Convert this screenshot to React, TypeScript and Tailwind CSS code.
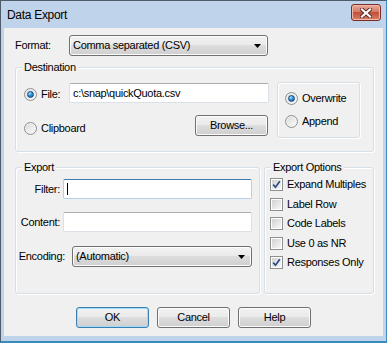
import React from "react";

const btnFace =
  "rounded-[3px] border border-[#707070] bg-[linear-gradient(#f2f2f2,#ebebeb_45%,#dddddd_50%,#cfcfcf)] shadow-[inset_0_0_0_1px_#fcfcfc]";
const groupBox =
  "relative border border-[#d5dfe5] rounded-[3px] shadow-[inset_1px_1px_0_#ffffff,1px_1px_0_#ffffff]";
const textBox =
  "h-[20px] bg-white border border-[#dbdfe6] border-t-[#abadb3] rounded-[2px] flex items-center pl-[3px]";

function Radio({ checked }: { checked?: boolean }) {
  return (
    <span className="w-[13px] h-[13px] shrink-0 rounded-full border border-[#8e8f8f] bg-[linear-gradient(135deg,#d6d6d6,#ffffff)] shadow-[inset_0_0_0_1px_#f2f2f2] flex items-center justify-center">
      {checked && (
        <span className="w-[7px] h-[7px] rounded-full border border-[#1b4f86] bg-[radial-gradient(circle_at_35%_30%,#b5e8ff,#2b8fd8_45%,#0b4f96)]" />
      )}
    </span>
  );
}

function Check({ checked }: { checked?: boolean }) {
  return (
    <span className="w-[13px] h-[13px] shrink-0 border border-[#8e8f8f] bg-white p-[1px] flex">
      <span className="flex-1 bg-[linear-gradient(135deg,#d2d2d2,#f6f6f6)] flex items-center justify-center">
        {checked && (
          <svg width="9" height="9" viewBox="0 0 9 9">
            <path d="M1.2 4.6 L3.5 7.2 L7.8 1.2" stroke="#2b4c8c" strokeWidth="1.7" fill="none" />
          </svg>
        )}
      </span>
    </span>
  );
}

function Combo({ value, width }: { value: string; width: string }) {
  return (
    <div className={`${btnFace} ${width} h-[21px] flex items-center pl-[3px] pr-[6px]`}>
      <span className="flex-1">{value}</span>
      <svg width="7" height="4" viewBox="0 0 7 4">
        <path d="M0 0 H7 L3.5 4 Z" fill="#000" />
      </svg>
    </div>
  );
}

function Legend({ text, left }: { text: string; left: string }) {
  return (
    <span className={`absolute -top-[7px] ${left} px-[2px] bg-[#f0f0f0] leading-[13px]`}>{text}</span>
  );
}

export default function App() {
  const options = [
    { label: "Expand Multiples", checked: true },
    { label: "Label Row", checked: false },
    { label: "Code Labels", checked: false },
    { label: "Use 0 as NR", checked: false },
    { label: "Responses Only", checked: true },
  ];

  return (
    <div className="w-[387px] h-[343px] flex flex-col bg-[#bfd4eb] border border-[#4f5d6b] border-r-[#3f8cc0] border-b-2 border-b-[#3a8cbf] font-['Liberation_Sans',Arial,sans-serif] text-[11px] tracking-[-0.3px] text-black leading-[13px]">
      {/* title bar */}
      <div className="h-[27px] flex justify-between items-start pl-[6px] pr-[5px]">
        <span className="mt-[7px] text-[12px] leading-[14px]">Data Export</span>
        <div className="mt-[3px] w-[30px] h-[17px] rounded-[3px] border border-[#7a2f24] bg-[linear-gradient(#ebaa9c,#d47a66_45%,#c2503c_50%,#d5806a)] shadow-[inset_0_0_0_1px_#f0b8aa] flex items-center justify-center">
          <svg width="12" height="10" viewBox="0 0 12 10">
            <path d="M2 1.5 L10 8.5 M10 1.5 L2 8.5" stroke="#5c2620" strokeWidth="4" strokeLinecap="square" />
            <path d="M2 1.5 L10 8.5 M10 1.5 L2 8.5" stroke="#ffffff" strokeWidth="2.2" strokeLinecap="square" />
          </svg>
        </div>
      </div>

      {/* client area */}
      <div className="mx-[3px] h-[308px] bg-[#f0f0f0] flex flex-col">
        <div className="ml-[11px] mt-[7px] flex items-center h-[21px]">
          <span className="w-[54px]">Format:</span>
          <Combo value="Comma separated (CSV)" width="w-[199px]" />
        </div>

        {/* Destination */}
        <div className={`${groupBox} ml-[11px] mt-[11px] w-[359px] h-[85px] flex pt-[14px]`}>
          <Legend text="Destination" left="left-[6px]" />
          <div className="w-[253px] pl-[8px] pt-[1px] flex flex-col">
            <div className="flex items-center h-[20px]">
              <span className="flex items-center gap-[4px] mt-[2px]">
                <Radio checked />
                <span>File:</span>
              </span>
              <div className={`${textBox} ml-auto w-[200px]`}>c:\snap\quickQuota.csv</div>
            </div>
            <div className="flex items-end h-[21px] mt-[12px]">
              <span className="flex items-center gap-[4px] mb-[1px]">
                <Radio />
                <span>Clipboard</span>
              </span>
              <div className={`${btnFace} ml-auto mr-[1px] w-[73px] h-[21px] flex items-center justify-center`}>
                Browse...
              </div>
            </div>
          </div>
          <div className={`${groupBox} ml-[8px] w-[83px] h-[56px] pl-[7px] pt-[9px] flex flex-col gap-[10px]`}>
            <span className="flex items-center gap-[4px] h-[13px]">
              <Radio checked />
              <span>Overwrite</span>
            </span>
            <span className="flex items-center gap-[4px] h-[13px]">
              <Radio />
              <span>Append</span>
            </span>
          </div>
        </div>

        {/* Export + Export Options */}
        <div className="ml-[11px] mt-[15px] flex gap-[4px]">
          <div className={`${groupBox} w-[245px] h-[127px] pt-[11px] flex flex-col`}>
            <Legend text="Export" left="left-[6px]" />
            <div className="flex items-center h-[20px]">
              <span className="w-[44px] text-right">Filter:</span>
              <div className="ml-[3px] w-[189px] h-[20px] bg-white border border-[#b5cfe7] border-t-[#3d7bad] rounded-[2px] flex items-center pl-[3px]">
                <span className="w-px h-[12px] bg-black" />
              </div>
            </div>
            <div className="flex items-center h-[20px] mt-[13px]">
              <span className="w-[44px] text-right">Content:</span>
              <div className={`${textBox} ml-[3px] w-[189px]`} />
            </div>
            <div className="flex items-center h-[21px] mt-[14px]">
              <span className="w-[49px] text-right">Encoding:</span>
              <div className="ml-[7px]">
                <Combo value="(Automatic)" width="w-[180px]" />
              </div>
            </div>
          </div>

          <div className={`${groupBox} w-[110px] h-[127px] pt-[7px] pl-[5px] flex flex-col`}>
            <Legend text="Export Options" left="left-[6px]" />
            {options.map((o) => (
              <span key={o.label} className="flex items-center gap-[4px] h-[19.5px]">
                <Check checked={o.checked} />
                <span>{o.label}</span>
              </span>
            ))}
          </div>
        </div>

        {/* buttons */}
        <div className="mt-[13px] flex justify-center gap-[8px]">
          <div className="w-[73px] h-[21px] rounded-[3px] border border-[#3c7fb1] bg-[linear-gradient(#f2f2f2,#ebebeb_45%,#dddddd_50%,#cfcfcf)] shadow-[inset_0_0_0_1px_#9fdcfb] flex items-center justify-center">
            OK
          </div>
          <div className={`${btnFace} w-[73px] h-[21px] flex items-center justify-center`}>Cancel</div>
          <div className={`${btnFace} w-[73px] h-[21px] flex items-center justify-center`}>Help</div>
        </div>
      </div>
    </div>
  );
}
